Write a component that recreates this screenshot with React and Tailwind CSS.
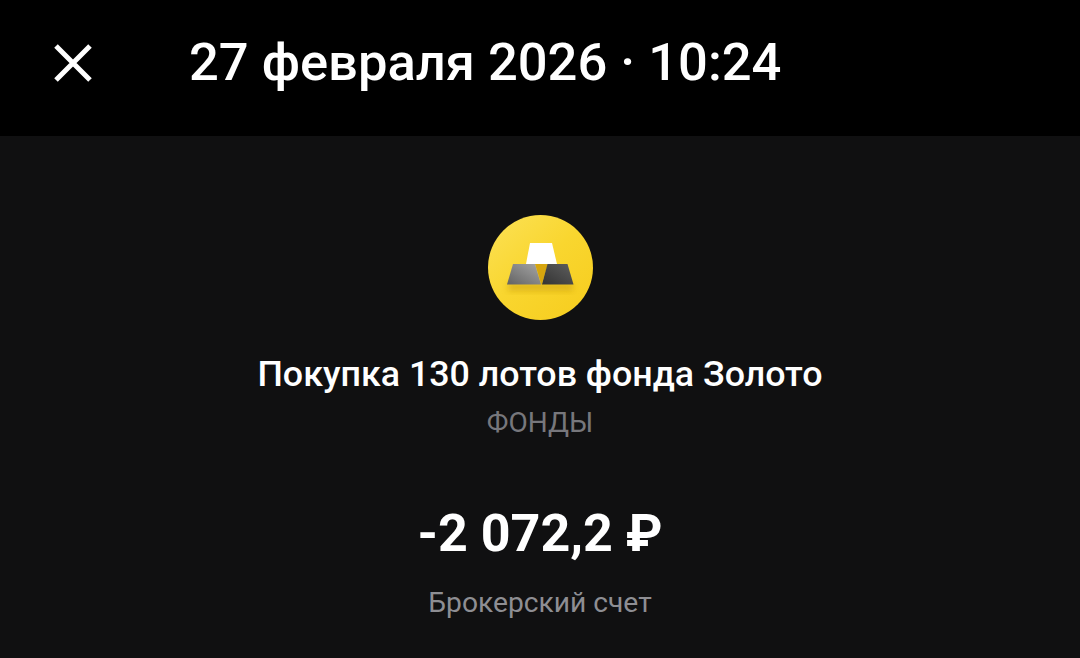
import React from "react";

function GoldIcon() {
  return (
    <svg width="105" height="105" viewBox="0 0 105 105">
      <defs>
        <linearGradient id="coin" x1="0.1" y1="0.1" x2="0.8" y2="0.9">
          <stop offset="0" stopColor="#fbdf4e" />
          <stop offset="0.5" stopColor="#f9d62f" />
          <stop offset="1" stopColor="#f7cf22" />
        </linearGradient>
        <linearGradient id="barLeft" x1="0" y1="1" x2="1" y2="0">
          <stop offset="0" stopColor="#626262" />
          <stop offset="1" stopColor="#a6a6a6" />
        </linearGradient>
        <linearGradient id="barRight" x1="0" y1="1" x2="1" y2="0">
          <stop offset="0" stopColor="#333333" />
          <stop offset="1" stopColor="#5e5e5e" />
        </linearGradient>
        <filter id="soft" x="-20%" y="-50%" width="140%" height="200%">
          <feGaussianBlur stdDeviation="3" />
        </filter>
      </defs>
      <circle cx="52.5" cy="52.5" r="52.5" fill="url(#coin)" />
      <rect x="20" y="68" width="65" height="8" fill="#c79c10" opacity="0.55" filter="url(#soft)" />
      <polygon points="42,28 64,28 69,49 38,49" fill="#ffffff" />
      <polygon points="47,49 60,49 53.5,70" fill="#d6a50e" />
      <polygon points="25,49 47,49 53,69.5 19,69.5" fill="url(#barLeft)" />
      <polygon points="59.5,49 79.5,49 85.5,69.5 54,69.5" fill="url(#barRight)" />
    </svg>
  );
}

export default function App() {
  return (
    <div className="h-[658px] w-[1080px] overflow-hidden bg-[#101011] font-['Roboto',sans-serif]">
      <div className="flex h-[136px] items-center bg-black pl-[54px]">
        <svg className="-mt-[10px]" width="38" height="38" viewBox="0 0 38 38" fill="none" stroke="#fff" strokeWidth="5">
          <path d="M2 2 L36 36 M36 2 L2 36" />
        </svg>
        <h1 className="ml-[97px] -mt-[12px] text-[52.5px] font-medium leading-none text-white">
          27 февраля 2026 · 10:24
        </h1>
      </div>

      <div className="flex flex-col items-center pt-[79px]">
        <GoldIcon />
        <p className="mt-[32px] text-[35.8px] font-medium leading-[44px] text-white">
          Покупка 130 лотов фонда Золото
        </p>
        <p className="mt-[9px] text-[28px] leading-[36px] text-[#77777c]">ФОНДЫ</p>
        <p className="mt-[63px] text-[52px] font-bold leading-[60px] text-white">-2 072,2 ₽</p>
        <p className="mt-[21px] text-[28.2px] leading-[36px] text-[#8e8e93]">Брокерский счет</p>
      </div>
    </div>
  );
}
